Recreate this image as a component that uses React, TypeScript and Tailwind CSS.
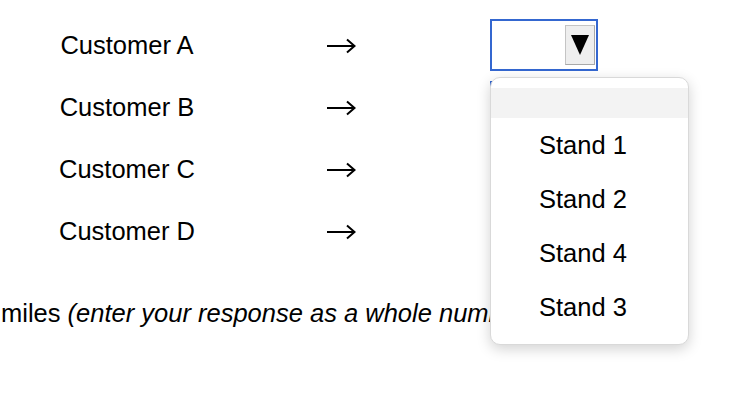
import React from "react";

const customers = ["Customer A", "Customer B", "Customer C", "Customer D"];
const options = ["Stand 1", "Stand 2", "Stand 4", "Stand 3"];

function SelectBox() {
  return (
    <div className="w-[108px] h-[52px] border-2 border-[#3467d0] bg-white flex items-center justify-end pr-[1px]">
      <div className="w-[30px] h-[40px] bg-[#eeeeee] border border-[#c4c4c4] border-b-[#a9a9a9] border-r-[#a9a9a9] flex items-center justify-center">
        <svg width="20" height="22" viewBox="0 0 20 22">
          <polygon points="1,1 19,1 10,21" fill="#000" />
        </svg>
      </div>
    </div>
  );
}

function Arrow() {
  return (
    <svg width="30" height="16" viewBox="0 0 30 16" className="block">
      <line x1="1" y1="8" x2="28" y2="8" stroke="#000" strokeWidth="2" />
      <polyline points="21,1.5 28.5,8 21,14.5" fill="none" stroke="#000" strokeWidth="2" />
    </svg>
  );
}

export default function App() {
  return (
    <div
      className="relative w-[750px] h-[398px] bg-white text-black overflow-hidden text-[25.5px]"
      style={{ fontFamily: '"Liberation Sans", Arial, sans-serif' }}
    >
      <div className="flex flex-col pt-[14px]">
        {customers.map((c) => (
          <div key={c} className="flex items-center h-[62px]">
            <div className="w-[254px] text-center leading-none pt-[2px]">{c}</div>
            <div className="w-[174px] flex justify-center">
              <div className="mt-[2px]">
                <Arrow />
              </div>
            </div>
            <div className="ml-[62px]">
              <SelectBox />
            </div>
          </div>
        ))}
        <div className="mt-[32px] pl-[1px] h-[40px] flex items-center whitespace-nowrap leading-none">
          miles&nbsp;<i>(enter your response as a whole number)</i>
        </div>
      </div>

      <div className="absolute left-[490px] top-[77px] w-[199px] h-[268px] bg-white rounded-[10px] border border-[#d9d9d9] shadow-[0_4px_14px_rgba(0,0,0,0.18)] py-[10px]">
        <div className="h-[30px] bg-[#f3f3f3]" />
        {options.map((o) => (
          <div key={o} className="h-[54px] flex items-center pl-[48px] pt-[2px] leading-none">
            {o}
          </div>
        ))}
      </div>
    </div>
  );
}
